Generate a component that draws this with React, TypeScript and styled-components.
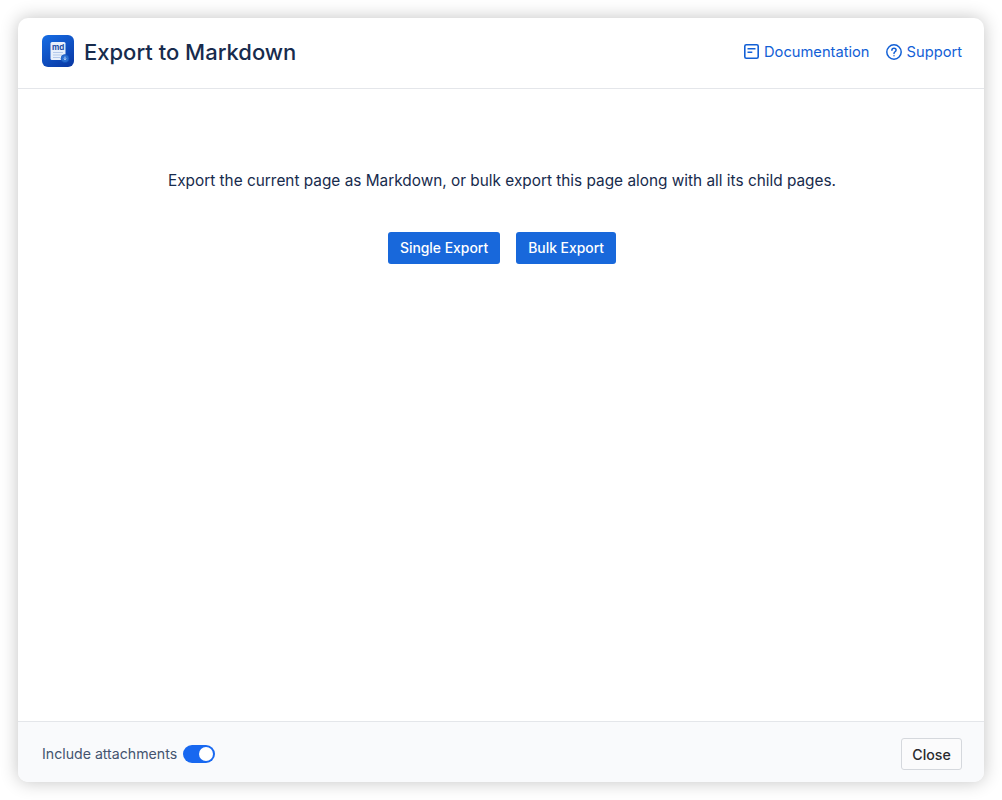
import styled, { createGlobalStyle } from "styled-components";

const GlobalStyle = createGlobalStyle`
    html, body {
        margin: 0;
        padding: 0;
        background: #ffffff;
    }

    body {
        font-family: "Inter", "Liberation Sans", sans-serif;
        -webkit-font-smoothing: antialiased;
    }
`;

const AppIcon = () => (
    <IconTile>
        <svg width="32" height="32" viewBox="0 0 32 32">
            <defs>
                <linearGradient id="tile" x1="0.2" y1="0" x2="0.8" y2="1">
                    <stop offset="0" stopColor="#1569e0" />
                    <stop offset="1" stopColor="#0a3aa6" />
                </linearGradient>
            </defs>
            <rect width="32" height="32" rx="6" fill="url(#tile)" />
            <rect x="8.5" y="7" width="15" height="18" rx="1.5" fill="#e8f0fb" />
            <rect x="11" y="17" width="10" height="1" fill="#b4c9ea" />
            <rect x="11" y="19.5" width="9" height="1" fill="#b4c9ea" />
            <rect x="11" y="22" width="7" height="1" fill="#b4c9ea" />
            <circle cx="23" cy="23.5" r="4" fill="#2a6fd2" stroke="#0f4fb5" strokeWidth="0.6" />
            <path d="M23 21.6v3M21.8 23.6l1.2 1.2 1.2-1.2" fill="none" stroke="#dbe8fb" strokeWidth="0.8" />
        </svg>
        <IconLabel>md</IconLabel>
    </IconTile>
);

const DocIcon = () => (
    <svg width="15" height="15" viewBox="0 0 15 15" fill="none" stroke="currentColor" strokeWidth="1.6">
        <rect x="0.8" y="0.8" width="13.4" height="13.4" rx="1.5" />
        <path d="M3.5 4.8h8M3.5 8.3h4.8" />
    </svg>
);

const HelpIcon = () => (
    <svg width="16" height="16" viewBox="0 0 16 16" fill="none" stroke="currentColor" strokeWidth="1.5">
        <circle cx="8" cy="8" r="7.2" />
        <path d="M5.9 6.2c0-1.2 1-2 2.1-2s2.1.8 2.1 1.9c0 1.7-2.1 1.6-2.1 3.3" strokeLinecap="round" />
        <circle cx="8" cy="11.7" r="0.7" fill="currentColor" stroke="none" />
    </svg>
);

const App = () => {
    return <Page>
        <GlobalStyle />
        <Dialog>
            <Header>
                <TitleGroup>
                    <AppIcon />
                    <Title>Export to Markdown</Title>
                </TitleGroup>
                <Links>
                    <HeaderLink href="#"><DocIcon />Documentation</HeaderLink>
                    <HeaderLink href="#"><HelpIcon />Support</HeaderLink>
                </Links>
            </Header>
            <Body>
                <Intro>Export the current page as Markdown, or bulk export this page along with all its child pages.</Intro>
                <Actions>
                    <PrimaryButton>Single Export</PrimaryButton>
                    <PrimaryButton>Bulk Export</PrimaryButton>
                </Actions>
            </Body>
            <Footer>
                <ToggleGroup>
                    <ToggleLabel>Include attachments</ToggleLabel>
                    <Toggle $on />
                </ToggleGroup>
                <CloseButton>Close</CloseButton>
            </Footer>
        </Dialog>
    </Page>
}

const Page = styled.div`
    box-sizing: border-box;
    width: 1002px;
    height: 800px;
    padding: 18px;
    overflow: hidden;
`;

const Dialog = styled.div`
    display: flex;
    flex-direction: column;
    box-sizing: border-box;
    width: 966px;
    height: 764px;
    overflow: hidden;
    background: #ffffff;
    border-radius: 10px;
    box-shadow: 0 0 18px rgba(0, 0, 0, 0.24);
`;

const Header = styled.header`
    display: flex;
    align-items: center;
    justify-content: space-between;
    box-sizing: border-box;
    height: 71px;
    padding: 0 22px 4px 24px;
    border-bottom: 1px solid #e4e6ea;
`;

const TitleGroup = styled.div`
    display: flex;
    align-items: center;
    gap: 10px;
`;

const IconTile = styled.div`
    position: relative;
    width: 32px;
    height: 32px;

    svg {
        display: block;
    }
`;

const IconLabel = styled.span`
    position: absolute;
    top: 7px;
    left: 10px;
    font-size: 8px;
    line-height: 10px;
    font-weight: 700;
    color: #1b4fa8;
`;

const Title = styled.h1`
    margin: 1px 0 0;
    font-size: 22px;
    line-height: 30px;
    font-weight: 500;
    color: #172b4d;
`;

const Links = styled.nav`
    display: flex;
    align-items: center;
    gap: 16px;
    padding-top: 1px;
`;

const HeaderLink = styled.a`
    display: flex;
    align-items: center;
    gap: 5px;
    font-size: 14.7px;
    line-height: 24px;
    color: #1260d6;
    text-decoration: none;
`;

const Body = styled.main`
    flex: 1;
    display: flex;
    flex-direction: column;
    align-items: center;
    padding: 80px 0 0 2px;
`;

const Intro = styled.p`
    margin: 0;
    font-size: 15.36px;
    line-height: 24px;
    color: #172b4d;
`;

const Actions = styled.div`
    display: flex;
    gap: 16px;
    margin-top: 39px;
`;

const PrimaryButton = styled.button`
    height: 32px;
    padding: 0 12px;
    border: none;
    border-radius: 3px;
    background: #1868db;
    color: #ffffff;
    font-family: inherit;
    font-size: 13.9px;
    font-weight: 500;
`;

const Footer = styled.footer`
    display: flex;
    align-items: center;
    justify-content: space-between;
    box-sizing: border-box;
    height: 61px;
    padding: 4px 22px 0 24px;
    border-top: 1px solid #e4e6ea;
    background: #f9fafc;
`;

const ToggleGroup = styled.div`
    display: flex;
    align-items: center;
    gap: 6px;
`;

const ToggleLabel = styled.span`
    font-size: 14.15px;
    line-height: 20px;
    color: #44546f;
`;

const Toggle = styled.span<{ $on?: boolean }>`
    position: relative;
    display: block;
    width: 32px;
    height: 18px;
    border-radius: 9px;
    background: ${({ $on }) => ($on ? "#1868f0" : "#8993a5")};

    &::after {
        content: "";
        position: absolute;
        top: 2px;
        left: ${({ $on }) => ($on ? "16px" : "2px")};
        width: 14px;
        height: 14px;
        border-radius: 50%;
        background: #ffffff;
    }
`;

const CloseButton = styled.button`
    box-sizing: border-box;
    width: 61px;
    height: 32px;
    padding: 0;
    border: 1px solid #d5d8dd;
    border-radius: 3px;
    background: #fbfbfc;
    color: #292a2e;
    font-family: inherit;
    font-size: 14.2px;
    font-weight: 500;
`;

export default App;
